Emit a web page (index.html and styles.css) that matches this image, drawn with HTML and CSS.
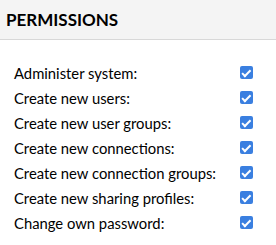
FILE: index.html
```html
<!DOCTYPE html>
<html>
<head>
<meta charset="utf-8">
<link rel="stylesheet" href="styles.css">
</head>
<body>
<div class="header"><h2 class="title">PERMISSIONS</h2></div>
<div class="section">
  <div class="row"><span class="label">Administer system:</span><span class="check"></span></div>
  <div class="row"><span class="label">Create new users:</span><span class="check"></span></div>
  <div class="row"><span class="label">Create new user groups:</span><span class="check"></span></div>
  <div class="row"><span class="label">Create new connections:</span><span class="check"></span></div>
  <div class="row"><span class="label">Create new connection groups:</span><span class="check"></span></div>
  <div class="row"><span class="label">Create new sharing profiles:</span><span class="check"></span></div>
  <div class="row"><span class="label">Change own password:</span><span class="check"></span></div>
</div>
</body>
</html>
```
FILE: styles.css
```css
html, body { margin: 0; padding: 0; background: #fff; }
body { font-family: Lato, "Open Sans", sans-serif; color: #000; }
.header {
  height: 39px;
  background: #f4f4f4;
  border-bottom: 1px solid #d8d8d8;
  display: flex;
  align-items: center;
  padding: 0 6px;
}
.title { margin: 0; font-size: 17px; font-weight: 700; }
.section { padding: 20px 0 0 14px; width: 239px; }
.row {
  height: 25px;
  display: flex;
  align-items: center;
  justify-content: space-between;
  font-size: 14.8px;
}
.check {
  width: 13px; height: 13px;
  border-radius: 2px;
  background: #3a7fe0;
  position: relative;
}
.check::after {
  content: "";
  position: absolute;
  left: 4px; top: 1.5px;
  width: 3px; height: 6.5px;
  border: solid #fff;
  border-width: 0 2px 2px 0;
  transform: rotate(45deg);
}
```
